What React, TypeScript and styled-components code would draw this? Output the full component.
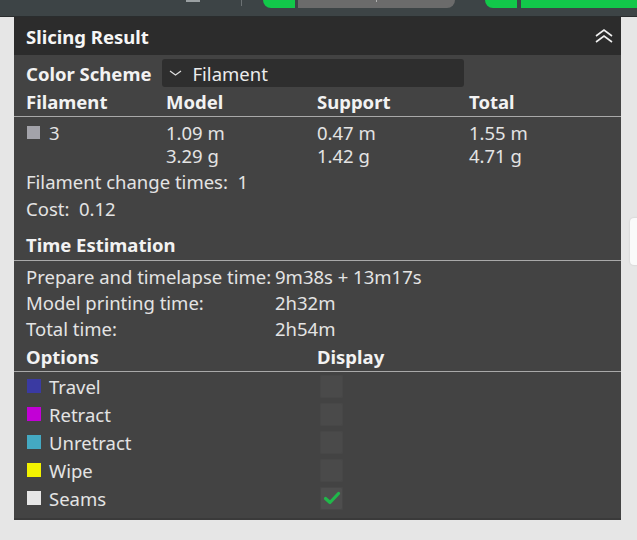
import styled, { createGlobalStyle } from 'styled-components';

const GlobalStyle = createGlobalStyle`
  html, body {
    margin: 0;
    padding: 0;
    background: #e6e6e6;
    font-family: "Noto Sans", "Open Sans", sans-serif;
  }
`;

const Page = styled.div`
  position: relative;
  width: 637px;
  height: 540px;
  overflow: hidden;
  background: #e6e6e6;
`;

const Toolbar = styled.div`
  height: 16px;
  background: #3d4446;
  border-bottom: 1px solid #2a2d2e;
  display: flex;
  align-items: flex-start;
`;

const ToolIcon = styled.div`
  margin-left: 186px;
  width: 14px;
  height: 2px;
  background: #9aa0a2;
`;

const Divider = styled.div`
  margin-left: 41px;
  width: 1px;
  height: 6px;
  background: #6c7274;
`;

const GreenTab = styled.div<{ $ml: number; $w: number }>`
  margin-left: ${(p) => p.$ml}px;
  width: ${(p) => p.$w}px;
  height: 8px;
  background: #12c84a;
  border-bottom-left-radius: 9px;
`;

const GrayPill = styled.div`
  position: relative;
  margin-left: 3px;
  width: 157px;
  height: 8px;
  background: #6b6b6b;
  border-bottom-right-radius: 9px;
`;

const PillTick = styled.div`
  position: absolute;
  left: 78px;
  top: 0;
  width: 1px;
  height: 2px;
  background: #b0b0b0;
`;

const GreenBar = styled.div`
  margin-left: 4px;
  flex: 1;
  height: 8px;
  background: #12c84a;
`;

const Panel = styled.div`
  margin-left: 14px;
  width: 607px;
  height: 503px;
  background: #434343;
  color: #e4e4e4;
  border-bottom: 2px solid #3a3a3a;
  box-sizing: border-box;
`;

const PanelHeader = styled.div`
  height: 38px;
  background: #2c2c2c;
  display: flex;
  align-items: center;
  justify-content: space-between;
  padding: 0 7px 0 12px;
`;

const PanelTitle = styled.div`
  font-size: 18.5px;
  font-weight: 700;
  color: #f6f6f6;
  margin-top: 1px;
`;

const Section = styled.div`
  padding-left: 12px;
`;

const SchemeRow = styled.div`
  display: flex;
  align-items: center;
  height: 28px;
  margin-top: 4px;
  gap: 10px;
`;

const Label = styled.div`
  font-size: 18.5px;
  font-weight: 700;
  color: #f2f2f2;
`;

const Select = styled.div`
  width: 302px;
  height: 28px;
  border-radius: 3px;
  background: #2e2e2e;
  display: flex;
  align-items: center;
  gap: 11px;
  padding-left: 7px;
  box-sizing: border-box;
  font-size: 18.5px;
  color: #ececec;
`;

const HeadRow = styled.div<{ $cols: string; $h: number }>`
  display: grid;
  grid-template-columns: ${(p) => p.$cols};
  align-items: center;
  height: ${(p) => p.$h}px;
  padding-left: 12px;
  border-bottom: 1px solid #a9a9a9;
`;

const DataGrid = styled.div<{ $cols: string }>`
  display: grid;
  grid-template-columns: ${(p) => p.$cols};
  padding-left: 12px;
  font-size: 18.5px;
`;

const Cell = styled.div`
  display: flex;
  flex-direction: column;
  line-height: 23px;
`;

const Swatch = styled.span<{ $c: string }>`
  display: inline-block;
  width: 13px;
  height: 13px;
  background: ${(p) => p.$c};
  margin: 0 9px 0 1px;
`;

const SwatchCell = styled.div`
  display: flex;
  align-items: center;
  height: 23px;
`;

const InfoLine = styled.div`
  padding-left: 12px;
  font-size: 18.5px;
  height: 27px;
  line-height: 27px;
  white-space: pre;
`;

const TimeGrid = styled.div`
  display: grid;
  grid-template-columns: 249px 1fr;
  grid-auto-rows: 26px;
  align-items: center;
  padding-left: 12px;
  font-size: 18.5px;
  white-space: nowrap;
`;

const OptionRow = styled.div`
  display: grid;
  grid-template-columns: 294px 1fr;
  align-items: center;
  height: 28px;
  padding-left: 12px;
  font-size: 18.5px;
`;

const OptionName = styled.div`
  display: flex;
  align-items: center;
`;

const Check = styled.div<{ $on?: boolean }>`
  width: 23px;
  height: 23px;
  border-radius: 2px;
  background: ${(p) => (p.$on ? '#4e4e4e' : '#4a4a4a')};
  box-shadow: inset 0 0 0 1px #474747;
  display: flex;
  align-items: center;
  justify-content: center;
`;

const SideCard = styled.div`
  position: absolute;
  left: 630px;
  top: 218px;
  width: 20px;
  height: 47px;
  background: #fafafa;
  border-radius: 4px;
  box-shadow: 0 0 2px rgba(0, 0, 0, 0.15);
`;

const options = [
  { name: 'Travel', color: '#3a3aa2', on: false },
  { name: 'Retract', color: '#c200d6', on: false },
  { name: 'Unretract', color: '#44a9c2', on: false },
  { name: 'Wipe', color: '#f2f200', on: false },
  { name: 'Seams', color: '#e6e6e6', on: true },
];

const tableCols = '140px 151px 152px 1fr';

export default function App() {
  return (
    <Page>
      <GlobalStyle />
      <Toolbar>
        <ToolIcon />
        <Divider />
        <GreenTab $ml={21} $w={32} />
        <GrayPill>
          <PillTick />
        </GrayPill>
        <GreenTab $ml={30} $w={32} />
        <GreenBar />
      </Toolbar>
      <Panel>
        <PanelHeader>
          <PanelTitle>Slicing Result</PanelTitle>
          <svg width="20" height="16" viewBox="0 0 20 16" fill="none" stroke="#f0f0f0" strokeWidth="1.6">
            <polyline points="2,8 10,2 18,8" />
            <polyline points="2,14 10,8 18,14" />
          </svg>
        </PanelHeader>
        <Section>
          <SchemeRow>
            <Label>Color Scheme</Label>
            <Select>
              <svg width="13" height="8" viewBox="0 0 13 8" fill="none" stroke="#e0e0e0" strokeWidth="1.2">
                <polyline points="1,2 6.5,6 12,2" />
              </svg>
              Filament
            </Select>
          </SchemeRow>
        </Section>
        <HeadRow $cols={tableCols} $h={29}>
          <Label>Filament</Label>
          <Label>Model</Label>
          <Label>Support</Label>
          <Label>Total</Label>
        </HeadRow>
        <DataGrid $cols={tableCols} style={{ paddingTop: 4 }}>
          <SwatchCell>
            <Swatch $c="#a3a3aa" />3
          </SwatchCell>
          <Cell>
            <span>1.09 m</span>
            <span>3.29 g</span>
          </Cell>
          <Cell>
            <span>0.47 m</span>
            <span>1.42 g</span>
          </Cell>
          <Cell>
            <span>1.55 m</span>
            <span>4.71 g</span>
          </Cell>
        </DataGrid>
        <InfoLine style={{ marginTop: 1 }}>Filament change times:  1</InfoLine>
        <InfoLine>Cost:  0.12</InfoLine>
        <HeadRow $cols="1fr" $h={35} style={{ alignItems: 'end', paddingBottom: 3 }}>
          <Label>Time Estimation</Label>
        </HeadRow>
        <TimeGrid style={{ marginTop: 2 }}>
          <span>Prepare and timelapse time:</span>
          <span>9m38s + 13m17s</span>
          <span>Model printing time:</span>
          <span>2h32m</span>
          <span>Total time:</span>
          <span>2h54m</span>
        </TimeGrid>
        <HeadRow $cols="291px 1fr" $h={28} style={{ alignItems: 'end', paddingBottom: 2 }}>
          <Label>Options</Label>
          <Label>Display</Label>
        </HeadRow>
        {options.map((o) => (
          <OptionRow key={o.name}>
            <OptionName>
              <Swatch $c={o.color} style={{ width: 14, height: 14, marginRight: 8 }} />
              {o.name}
            </OptionName>
            <Check $on={o.on}>
              {o.on && (
                <svg width="18" height="16" viewBox="0 0 18 16" fill="none" stroke="#20b84a" strokeWidth="3.2" strokeLinecap="round" strokeLinejoin="round">
                  <polyline points="2.5,8.5 7,12.5 15.5,3.5" />
                </svg>
              )}
            </Check>
          </OptionRow>
        ))}
      </Panel>
      <SideCard />
    </Page>
  );
}
